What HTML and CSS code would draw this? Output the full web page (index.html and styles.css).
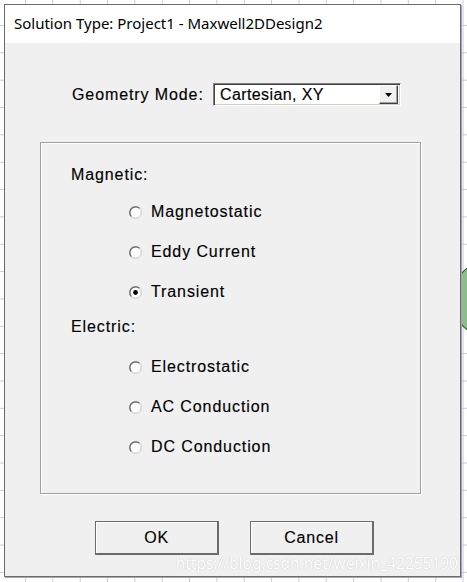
FILE: index.html
```html
<!DOCTYPE html>
<html>
<head>
<meta charset="utf-8">
<link rel="stylesheet" href="styles.css">
</head>
<body>
<div class="blob"></div>
<div class="dialog">
  <div class="titlebar">Solution Type: Project1 - Maxwell2DDesign2</div>
  <div class="content">
    <div class="geo-row">
      <span class="geo-label">Geometry Mode:</span>
      <div class="select">
        <span class="select-text">Cartesian, XY</span>
        <span class="select-btn"><svg width="7" height="4" viewBox="0 0 7 4"><path d="M0 0H7L3.5 4Z" fill="#000"/></svg></span>
      </div>
    </div>
    <div class="group">
      <div class="section-label first">Magnetic:</div>
      <div class="radio-row"><svg class="radio" width="13" height="13" viewBox="0 0 13 13"><circle cx="6.5" cy="6.5" r="5.8" fill="#fff" stroke="#b8b8b8" stroke-width="1.2"/><path d="M2.4 10.6A5.8 5.8 0 0 1 10.6 2.4" fill="none" stroke="#6a6a6a" stroke-width="1.3"/><path d="M10.6 2.4A5.8 5.8 0 0 1 2.4 10.6" fill="none" stroke="#e4e4e4" stroke-width="1.2"/></svg><span>Magnetostatic</span></div>
      <div class="radio-row"><svg class="radio" width="13" height="13" viewBox="0 0 13 13"><circle cx="6.5" cy="6.5" r="5.8" fill="#fff" stroke="#b8b8b8" stroke-width="1.2"/><path d="M2.4 10.6A5.8 5.8 0 0 1 10.6 2.4" fill="none" stroke="#6a6a6a" stroke-width="1.3"/><path d="M10.6 2.4A5.8 5.8 0 0 1 2.4 10.6" fill="none" stroke="#e4e4e4" stroke-width="1.2"/></svg><span>Eddy Current</span></div>
      <div class="radio-row"><svg class="radio" width="13" height="13" viewBox="0 0 13 13"><circle cx="6.5" cy="6.5" r="5.8" fill="#fff" stroke="#b8b8b8" stroke-width="1.2"/><path d="M2.4 10.6A5.8 5.8 0 0 1 10.6 2.4" fill="none" stroke="#6a6a6a" stroke-width="1.3"/><path d="M10.6 2.4A5.8 5.8 0 0 1 2.4 10.6" fill="none" stroke="#e4e4e4" stroke-width="1.2"/><circle cx="6.5" cy="6.5" r="2.4" fill="#000"/></svg><span>Transient</span></div>
      <div class="section-label second">Electric:</div>
      <div class="radio-row"><svg class="radio" width="13" height="13" viewBox="0 0 13 13"><circle cx="6.5" cy="6.5" r="5.8" fill="#fff" stroke="#b8b8b8" stroke-width="1.2"/><path d="M2.4 10.6A5.8 5.8 0 0 1 10.6 2.4" fill="none" stroke="#6a6a6a" stroke-width="1.3"/><path d="M10.6 2.4A5.8 5.8 0 0 1 2.4 10.6" fill="none" stroke="#e4e4e4" stroke-width="1.2"/></svg><span>Electrostatic</span></div>
      <div class="radio-row"><svg class="radio" width="13" height="13" viewBox="0 0 13 13"><circle cx="6.5" cy="6.5" r="5.8" fill="#fff" stroke="#b8b8b8" stroke-width="1.2"/><path d="M2.4 10.6A5.8 5.8 0 0 1 10.6 2.4" fill="none" stroke="#6a6a6a" stroke-width="1.3"/><path d="M10.6 2.4A5.8 5.8 0 0 1 2.4 10.6" fill="none" stroke="#e4e4e4" stroke-width="1.2"/></svg><span>AC Conduction</span></div>
      <div class="radio-row"><svg class="radio" width="13" height="13" viewBox="0 0 13 13"><circle cx="6.5" cy="6.5" r="5.8" fill="#fff" stroke="#b8b8b8" stroke-width="1.2"/><path d="M2.4 10.6A5.8 5.8 0 0 1 10.6 2.4" fill="none" stroke="#6a6a6a" stroke-width="1.3"/><path d="M10.6 2.4A5.8 5.8 0 0 1 2.4 10.6" fill="none" stroke="#e4e4e4" stroke-width="1.2"/></svg><span>DC Conduction</span></div>
    </div>
    <div class="buttons">
      <div class="btn">OK</div>
      <div class="btn">Cancel</div>
    </div>
  </div>
  <div class="watermark">https://blog.csdn.net/weixin_42255190</div>
</div>
</body>
</html>
```
FILE: styles.css
```css
html, body {
  margin: 0;
  padding: 0;
}
body {
  width: 467px;
  height: 582px;
  overflow: hidden;
  position: relative;
  background-color: #ffffff;
  background-image:
    linear-gradient(to right, #c9c9dc 1px, transparent 1px),
    linear-gradient(to bottom, #c9c9dc 1px, transparent 1px);
  background-size: 27.35px 27.35px;
  background-position: 25px 25px;
}
.blob {
  position: absolute;
  left: 452px;
  top: 259px;
  width: 15px;
  height: 80px;
  background: radial-gradient(circle at 40px 40px, #8fbc8f 0, #8fbc8f 38.8px, #3d5c3d 39.3px, #3d5c3d 40px, transparent 40.5px);
}
.dialog {
  position: relative;
  margin: 4px 0 0 4px;
  width: 457px;
  height: 573px;
  box-sizing: border-box;
  border: 1px solid #6b6b6b;
  box-shadow: 1px 1px 0 #a8a8a8;
  background: #f0f0f0;
  display: flex;
  flex-direction: column;
}
.titlebar {
  height: 38px;
  background: #ffffff;
  font-family: "Noto Sans", "Open Sans", sans-serif;
  font-size: 15px;
  color: #000;
  padding-left: 9px;
  line-height: 36px;
  white-space: nowrap;
}
.content {
  flex: 1;
  display: flex;
  flex-direction: column;
  font-family: "Liberation Sans", Arial, sans-serif;
  font-size: 16px;
  color: #000;
  letter-spacing: 0.9px;
  -webkit-text-stroke: 0.15px #000;
}
.geo-row {
  display: flex;
  align-items: center;
  margin-top: 40px;
  padding-left: 67px;
  height: 23px;
}
.geo-label {
  width: 141px;
  flex: none;
}
.select {
  width: 188px;
  height: 23px;
  box-sizing: border-box;
  background: #fff;
  border-top: 1px solid #808080;
  border-left: 1px solid #808080;
  border-right: 1px solid #ffffff;
  border-bottom: 1px solid #ffffff;
  box-shadow: inset 1px 1px 0 #404040, inset -1px -1px 0 #d4d0c8;
  display: flex;
  align-items: center;
  justify-content: space-between;
  padding: 2px;
}
.select-text {
  padding-left: 4px;
  letter-spacing: 0.4px;
}
.select-btn {
  width: 19px;
  height: 19px;
  box-sizing: border-box;
  background: #f0f0f0;
  border-top: 1px solid #ffffff;
  border-left: 1px solid #ffffff;
  border-right: 1px solid #404040;
  border-bottom: 1px solid #404040;
  box-shadow: inset -1px -1px 0 #a0a0a0;
  display: flex;
  align-items: center;
  justify-content: center;
}
.group {
  margin-top: 36px;
  margin-left: 35px;
  width: 381px;
  height: 352px;
  box-sizing: border-box;
  border: 1px solid #a0a0a0;
  box-shadow: 1px 1px 0 #ffffff, inset 1px 1px 0 #ffffff;
  padding-top: 20px;
  padding-left: 30px;
  display: flex;
  flex-direction: column;
}
.section-label {
  height: 24px;
  line-height: 24px;
}
.section-label.first {
  margin-bottom: 5px;
}
.section-label.second {
  margin-top: 3px;
  margin-bottom: 8px;
}
.radio-row {
  height: 40px;
  display: flex;
  align-items: center;
  padding-left: 58px;
}
.radio {
  flex: none;
  margin-right: 9px;
}
.buttons {
  display: flex;
  margin-top: 27px;
  margin-left: 90px;
  gap: 31px;
}
.btn {
  width: 124px;
  height: 34px;
  box-sizing: border-box;
  border: 1px solid #6b6b6b;
  border-right-width: 2px;
  border-bottom-width: 2px;
  box-shadow: inset 1px 1px 0 #ffffff;
  background: #f0f0f0;
  display: flex;
  align-items: center;
  justify-content: center;
  letter-spacing: 0.8px;
}
.watermark {
  position: absolute;
  right: 2px;
  bottom: 2px;
  font-family: "Noto Sans", "Open Sans", sans-serif;
  font-size: 15.5px;
  color: #ffffff;
  text-shadow: 0 0 1px rgba(140, 140, 140, 0.55);
  letter-spacing: 0;
  white-space: nowrap;
}
```
